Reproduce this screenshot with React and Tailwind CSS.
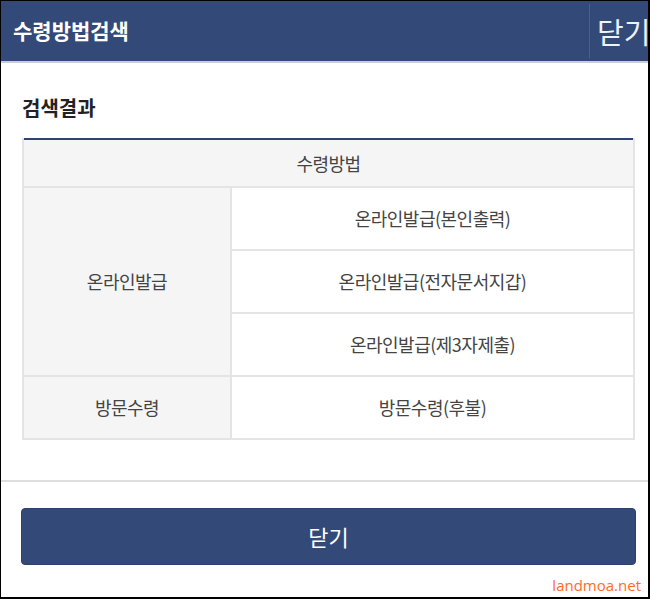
import React from 'react';

const rows = [
  { group: '온라인발급', items: ['온라인발급(본인출력)', '온라인발급(전자문서지갑)', '온라인발급(제3자제출)'] },
  { group: '방문수령', items: ['방문수령(후불)'] },
];

const App = () => {
  return (
    <div
      className="w-[650px] h-[599px] bg-white border-l border-t border-r-2 border-b-2 border-black flex flex-col overflow-hidden"
      style={{ fontFamily: '"Noto Sans CJK KR", "Noto Sans", sans-serif' }}
    >
      {/* header */}
      <div className="h-[62px] shrink-0 bg-[#334a78] border-b-2 border-[#c9cdd6] flex items-center">
        <h1 className="pl-[12px] text-[21px] font-bold text-white flex-1">수령방법검색</h1>
        <div className="h-[54px] w-px bg-[#4b5f89]"></div>
        <span className="pl-[7px] text-[29px] leading-none text-[#eef2fa] w-[58px] whitespace-nowrap">닫기</span>
      </div>

      {/* body */}
      <div className="pl-[21px] pt-[31px] h-[417px] shrink-0">
        <h2 className="text-[20px] font-bold text-[#222] leading-[28px] mb-[16px]">검색결과</h2>
        <table className="w-[613px] border-collapse border-t-2 border-t-[#2d4372] text-[18px] tracking-[-0.5px] text-[#444] text-center">
          <thead>
            <tr className="h-[48px] bg-[#f5f5f5]">
              <th colSpan={2} className="font-normal border-2 border-[#e4e4e4] border-t-0">수령방법</th>
            </tr>
          </thead>
          <tbody>
            {rows.map((r) =>
              r.items.map((item, i) => (
                <tr key={item} className="h-[63px]">
                  {i === 0 && (
                    <td rowSpan={r.items.length} className="w-[208px] bg-[#f5f5f5] border-2 border-[#e4e4e4]">
                      {r.group}
                    </td>
                  )}
                  <td className="border-2 border-[#e4e4e4]">{item}</td>
                </tr>
              ))
            )}
          </tbody>
        </table>
      </div>

      {/* footer */}
      <div className="border-t-2 border-[#dedede] flex-1 flex flex-col pt-[26px] pl-[20px]">
        <button className="w-[615px] h-[57px] bg-[#334a78] rounded-[4px] text-white text-[22px] border border-[#2c416c]">
          닫기
        </button>
        <div
          className="mt-[9px] w-[620px] text-right text-[15px] text-[#ff6a2a]"
          style={{ fontFamily: '"Open Sans", "Noto Sans", sans-serif' }}
        >
          landmoa.net
        </div>
      </div>
    </div>
  );
};

export default App;
